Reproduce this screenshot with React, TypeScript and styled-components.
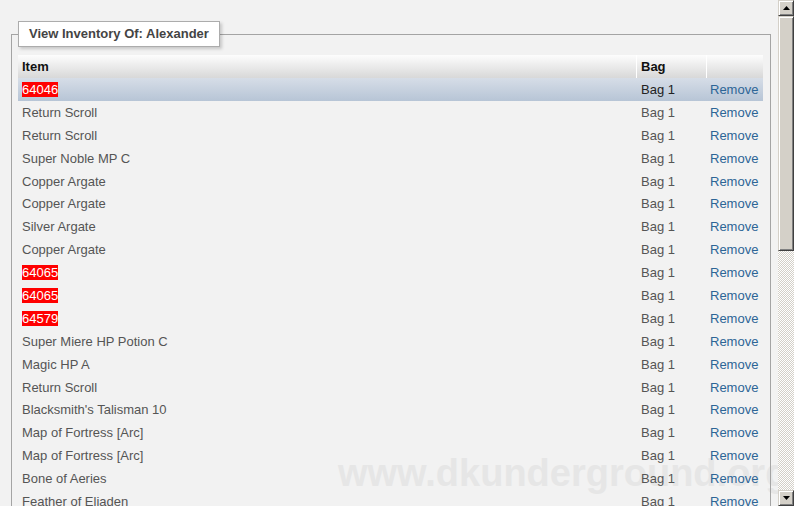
import React from "react";
import styled, { createGlobalStyle } from "styled-components";

const Global = createGlobalStyle`
  html, body { margin: 0; padding: 0; overflow: hidden; background: #f2f2f2; }
  body { font-family: "Liberation Sans", Arial, sans-serif; }
`;

const Page = styled.div`
  display: flex;
  width: 794px;
  height: 506px;
  overflow: hidden;
  background: #f2f2f2;
`;

const Main = styled.div`
  position: relative;
  flex: 1;
  overflow: hidden;
  padding: 21px 7px 0 11px;
`;

const Watermark = styled.div`
  position: absolute;
  left: 338px;
  top: 454px;
  z-index: 0;
  font-family: "Liberation Sans", Arial, sans-serif;
  font-weight: bold;
  font-size: 38px;
  line-height: 38px;
  color: #e6e6e6;
  white-space: nowrap;
`;

const Fieldset = styled.fieldset`
  position: relative;
  z-index: 1;
  margin: 0;
  padding: 8px 7px 0 6px;
  border: 1px solid #a4a4a4;
  min-width: 0;
`;

const Legend = styled.legend`
  margin: 0;
  padding: 0 10px;
  height: 24px;
  line-height: 24px;
  background: #ffffff;
  border: 1px solid #acacac;
  box-shadow: 2px 2px 3px rgba(0, 0, 0, 0.18);
  font-family: "Liberation Sans", Arial, sans-serif;
  font-weight: bold;
  font-size: 13px;
  color: #444444;
`;

const Grid = styled.div`
  display: grid;
  grid-template-columns: 619px 70px 56px;
  width: 745px;
`;

const HeadCell = styled.div<{ $last?: boolean }>`
  height: 23px;
  line-height: 23px;
  padding-left: 4px;
  box-sizing: border-box;
  border-right: ${(p) => (p.$last ? "none" : "1px solid #ffffff")};
  background: linear-gradient(#fdfdfd, #d8d8d8);
  font-weight: bold;
  font-size: 13px;
  color: #111111;
`;

const Row = styled.div<{ $selected?: boolean }>`
  display: contents;
  & > div {
    background: ${(p) =>
      p.$selected ? "linear-gradient(#d6dde7, #b7c5d6)" : "transparent"};
    color: ${(p) => (p.$selected ? "#222222" : "#555555")};
  }
`;

const Cell = styled.div<{ $pad?: number }>`
  height: 22.9px;
  line-height: 23px;
  padding-left: ${(p) => p.$pad ?? 4}px;
  box-sizing: border-box;
  font-size: 13px;
  white-space: nowrap;
  overflow: hidden;
`;

const Missing = styled.span`
  background: #ff0000;
  color: #ffffff;
  display: inline-block;
  line-height: 15px;
`;

const RemoveLink = styled.a`
  color: #2d6596;
  text-decoration: none;
  cursor: pointer;
`;

const Scrollbar = styled.div`
  width: 16px;
  height: 506px;
  display: flex;
  flex-direction: column;
  background: repeating-conic-gradient(#d4d0c8 0 25%, #ffffff 0 50%) 0 0 / 2px 2px;
`;

const ScrollButton = styled.div`
  width: 16px;
  height: 16px;
  box-sizing: border-box;
  background: #d4d0c8;
  border-top: 1px solid #d4d0c8;
  border-left: 1px solid #d4d0c8;
  border-right: 1px solid #404040;
  border-bottom: 1px solid #404040;
  box-shadow: inset 1px 1px 0 #ffffff, inset -1px -1px 0 #808080;
  display: flex;
  align-items: center;
  justify-content: center;
  flex-shrink: 0;
`;

const Thumb = styled.div`
  width: 16px;
  height: 235px;
  box-sizing: border-box;
  background: #d4d0c8;
  border-top: 1px solid #d4d0c8;
  border-left: 1px solid #d4d0c8;
  border-right: 1px solid #404040;
  border-bottom: 1px solid #404040;
  box-shadow: inset 1px 1px 0 #ffffff, inset -1px -1px 0 #808080;
  flex-shrink: 0;
`;

const Track = styled.div`
  flex: 1;
`;

const Arrow = ({ up }: { up?: boolean }) => (
  <svg width="7" height="4" viewBox="0 0 7 4">
    <polygon
      points={up ? "3.5,0 7,4 0,4" : "0,0 7,0 3.5,4"}
      fill="#000000"
    />
  </svg>
);

const items: { name: string; missing?: boolean }[] = [
  { name: "64046", missing: true },
  { name: "Return Scroll" },
  { name: "Return Scroll" },
  { name: "Super Noble MP C" },
  { name: "Copper Argate" },
  { name: "Copper Argate" },
  { name: "Silver Argate" },
  { name: "Copper Argate" },
  { name: "64065", missing: true },
  { name: "64065", missing: true },
  { name: "64579", missing: true },
  { name: "Super Miere HP Potion C" },
  { name: "Magic HP A" },
  { name: "Return Scroll" },
  { name: "Blacksmith's Talisman 10" },
  { name: "Map of Fortress [Arc]" },
  { name: "Map of Fortress [Arc]" },
  { name: "Bone of Aeries" },
  { name: "Feather of Eliaden" },
  { name: "Return Scroll" },
  { name: "Return Scroll" },
];

export default function App() {
  return (
    <Page>
      <Global />
      <Main>
        <Watermark>www.dkunderground.org</Watermark>
        <Fieldset>
          <Legend>View Inventory Of: Alexander</Legend>
          <Grid>
            <HeadCell>Item</HeadCell>
            <HeadCell>Bag</HeadCell>
            <HeadCell $last />
            {items.map((it, i) => (
              <Row key={i} $selected={i === 0}>
                <Cell>{it.missing ? <Missing>{it.name}</Missing> : it.name}</Cell>
                <Cell>Bag 1</Cell>
                <Cell $pad={3}>
                  <RemoveLink>Remove</RemoveLink>
                </Cell>
              </Row>
            ))}
          </Grid>
        </Fieldset>
      </Main>
      <Scrollbar>
        <ScrollButton>
          <Arrow up />
        </ScrollButton>
        <Thumb />
        <Track />
        <ScrollButton>
          <Arrow />
        </ScrollButton>
      </Scrollbar>
    </Page>
  );
}
